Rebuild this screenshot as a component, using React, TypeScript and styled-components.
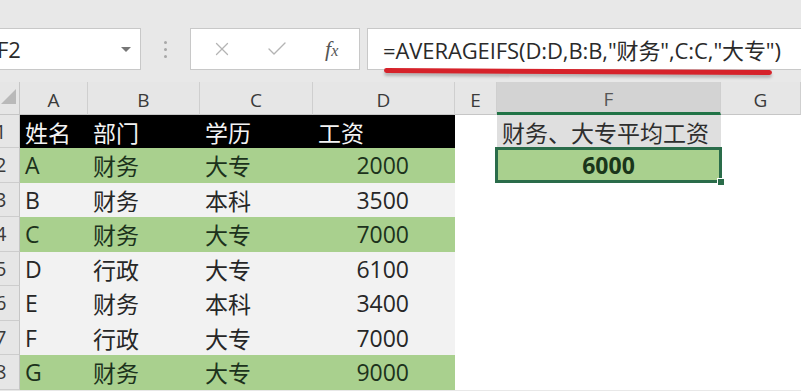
import styled, { createGlobalStyle } from "styled-components";
import { X, Check } from "lucide-react";

const GlobalStyle = createGlobalStyle`
  html, body {
    margin: 0;
    padding: 0;
    background: #e8e8e8;
  }
  * {
    box-sizing: border-box;
  }
`;

const FONT = `"Open Sans", "Noto Sans CJK SC", sans-serif`;
const GREEN = "#a9d08e";
const COLS = [20, 68, 112, 113, 142, 42, 224, 80];
const LETTERS = ["A", "B", "C", "D", "E", "F", "G"];

type Person = { name: string; dept: string; edu: string; pay: string; hit: boolean };

const people: Person[] = [
  { name: "A", dept: "财务", edu: "大专", pay: "2000", hit: true },
  { name: "B", dept: "财务", edu: "本科", pay: "3500", hit: false },
  { name: "C", dept: "财务", edu: "大专", pay: "7000", hit: true },
  { name: "D", dept: "行政", edu: "大专", pay: "6100", hit: false },
  { name: "E", dept: "财务", edu: "本科", pay: "3400", hit: false },
  { name: "F", dept: "行政", edu: "大专", pay: "7000", hit: false },
  { name: "G", dept: "财务", edu: "大专", pay: "9000", hit: true },
];

export default function App() {
  return (
    <Frame>
      <GlobalStyle />
      <Toolbar>
        <NameBox>
          <NameText>F2</NameText>
          <Caret />
        </NameBox>
        <Grip>
          <Dot />
          <Dot />
          <Dot />
        </Grip>
        <EditBox>
          <ToolButton>
            <X size={22} strokeWidth={1.4} />
          </ToolButton>
          <ToolButton>
            <Check size={24} strokeWidth={1.4} />
          </ToolButton>
          <ToolButton>
            <Fx>
              f<small>x</small>
            </Fx>
          </ToolButton>
        </EditBox>
        <FormulaBox>
          <FormulaText>=AVERAGEIFS(D:D,B:B,"财务",C:C,"大专")</FormulaText>
          <Underline />
        </FormulaBox>
      </Toolbar>

      <Sheet>
        <Corner>
          <CornerMark />
        </Corner>
        {LETTERS.map((l) => (
          <ColHeader key={l} $active={l === "F"}>
            {l}
          </ColHeader>
        ))}

        <RowHeader>1</RowHeader>
        <Cell $fill="#000" $ink="#f4f4f4">姓名</Cell>
        <Cell $fill="#000" $ink="#f4f4f4">部门</Cell>
        <Cell $fill="#000" $ink="#f4f4f4">学历</Cell>
        <Cell $fill="#000" $ink="#f4f4f4">工资</Cell>
        <Cell />
        <Cell $fill="#dfdfdf" $ink="#2e2e2e">财务、大专平均工资</Cell>
        <Cell />

        {people.map((p, i) => {
          const fill = p.hit ? GREEN : "#f2f2f2";
          const ink = p.hit ? "#1c321c" : "#272727";
          return (
            <Row key={p.name}>
              <RowHeader>{i + 2}</RowHeader>
              <Cell $fill={fill} $ink={ink}>{p.name}</Cell>
              <Cell $fill={fill} $ink={ink}>{p.dept}</Cell>
              <Cell $fill={fill} $ink={ink}>{p.edu}</Cell>
              <Cell $fill={fill} $ink={ink} $number>
                {p.pay}
              </Cell>
              <Cell />
              {i === 0 ? (
                <Selected>
                  6000
                  <Handle />
                </Selected>
              ) : (
                <Cell />
              )}
              <Cell />
            </Row>
          );
        })}
      </Sheet>
    </Frame>
  );
}

const Frame = styled.div`
  width: 801px;
  height: 391px;
  overflow: hidden;
  background: #e8e8e8;
  font-family: ${FONT};
`;

const Toolbar = styled.div`
  display: flex;
  align-items: flex-start;
  height: 82px;
  padding-top: 28px;
`;

const NameBox = styled.div`
  width: 141px;
  height: 42px;
  display: flex;
  align-items: center;
  justify-content: space-between;
  padding-right: 9px;
  background: #fff;
  border: 1px solid #c8c8c8;
  border-left: none;
`;

const NameText = styled.span`
  margin-left: -3px;
  font-size: 22px;
  color: #2a2a2a;
`;

const Caret = styled.span`
  width: 0;
  height: 0;
  border-left: 5px solid transparent;
  border-right: 5px solid transparent;
  border-top: 5px solid #777;
`;

const Grip = styled.div`
  width: 49px;
  height: 42px;
  display: flex;
  flex-direction: column;
  align-items: center;
  justify-content: center;
  gap: 4px;
`;

const Dot = styled.span`
  width: 3px;
  height: 3px;
  border-radius: 50%;
  background: #a8a8a8;
`;

const EditBox = styled.div`
  width: 170px;
  height: 42px;
  display: flex;
  align-items: center;
  padding-left: 4px;
  background: #fff;
  border: 1px solid #c8c8c8;
`;

const ToolButton = styled.div`
  width: 56px;
  display: flex;
  justify-content: center;
  color: #b4b4b4;
`;

const Fx = styled.span`
  font-family: "Liberation Serif", serif;
  font-style: italic;
  font-size: 22px;
  color: #555;
  small {
    font-size: 16px;
  }
`;

const FormulaBox = styled.div`
  position: relative;
  flex: 1;
  height: 42px;
  margin-left: 7px;
  display: flex;
  align-items: center;
  padding-left: 15px;
  background: #fff;
  border: 1px solid #c8c8c8;
  border-right: none;
`;

const FormulaText = styled.span`
  font-size: 22px;
  color: #2a2a2a;
  white-space: nowrap;
  letter-spacing: -0.1px;
`;

const Underline = styled.span`
  position: absolute;
  left: 16px;
  bottom: -5px;
  width: 388px;
  height: 5px;
  border-radius: 3px;
  background: #d6222a;
  box-shadow: 0 3px 3px rgba(0, 0, 0, 0.22);
  transform: rotate(0.3deg);
`;

const Sheet = styled.div`
  display: grid;
  grid-template-columns: ${COLS.map((c) => `${c}px`).join(" ")};
  grid-template-rows: 33px 33px repeat(7, 34.5px);
  background: #fff;
`;

const Row = styled.div`
  display: contents;
`;

const Corner = styled.div`
  position: relative;
  background: #e6e6e6;
  border-right: 1px solid #c6c6c6;
  border-bottom: 1px solid #c6c6c6;
`;

const CornerMark = styled.span`
  position: absolute;
  right: 3px;
  bottom: 10px;
  width: 0;
  height: 0;
  border-left: 15px solid transparent;
  border-bottom: 15px solid #b9b9b9;
`;

const ColHeader = styled.div<{ $active?: boolean }>`
  display: flex;
  align-items: center;
  justify-content: center;
  padding-top: 4px;
  font-size: 19px;
  color: ${(p) => (p.$active ? "#555" : "#3a3a3a")};
  background: ${(p) => (p.$active ? "#d3d3d3" : "#e6e6e6")};
  border-right: 1px solid #cfcfcf;
  border-bottom: ${(p) => (p.$active ? "3px solid #217346" : "1px solid #c6c6c6")};
`;

const RowHeader = styled.div`
  display: flex;
  align-items: center;
  overflow: hidden;
  text-indent: -5px;
  font-size: 20px;
  color: #3a3a3a;
  background: #e6e6e6;
  border-right: 1px solid #c6c6c6;
  border-bottom: 1px solid #cdcdcd;
`;

const Cell = styled.div<{ $fill?: string; $ink?: string; $number?: boolean }>`
  display: flex;
  align-items: center;
  justify-content: ${(p) => (p.$number ? "flex-end" : "flex-start")};
  padding: ${(p) => (p.$number ? "0 46px 0 0" : "0 0 0 5px")};
  white-space: nowrap;
  overflow: hidden;
  font-size: 23px;
  color: ${(p) => p.$ink ?? "#222"};
  background: ${(p) => p.$fill ?? "#fff"};
`;

const Selected = styled.div`
  position: relative;
  display: flex;
  align-items: center;
  justify-content: center;
  margin: -1px -1px 0 -2px;
  font-size: 23px;
  font-weight: 700;
  color: #1a361a;
  background: ${GREEN};
  border: 3px solid #2a6c4a;
`;

const Handle = styled.span`
  position: absolute;
  right: -6px;
  bottom: -6px;
  width: 8px;
  height: 8px;
  background: #2a6c4a;
  border: 1px solid #fff;
`;
